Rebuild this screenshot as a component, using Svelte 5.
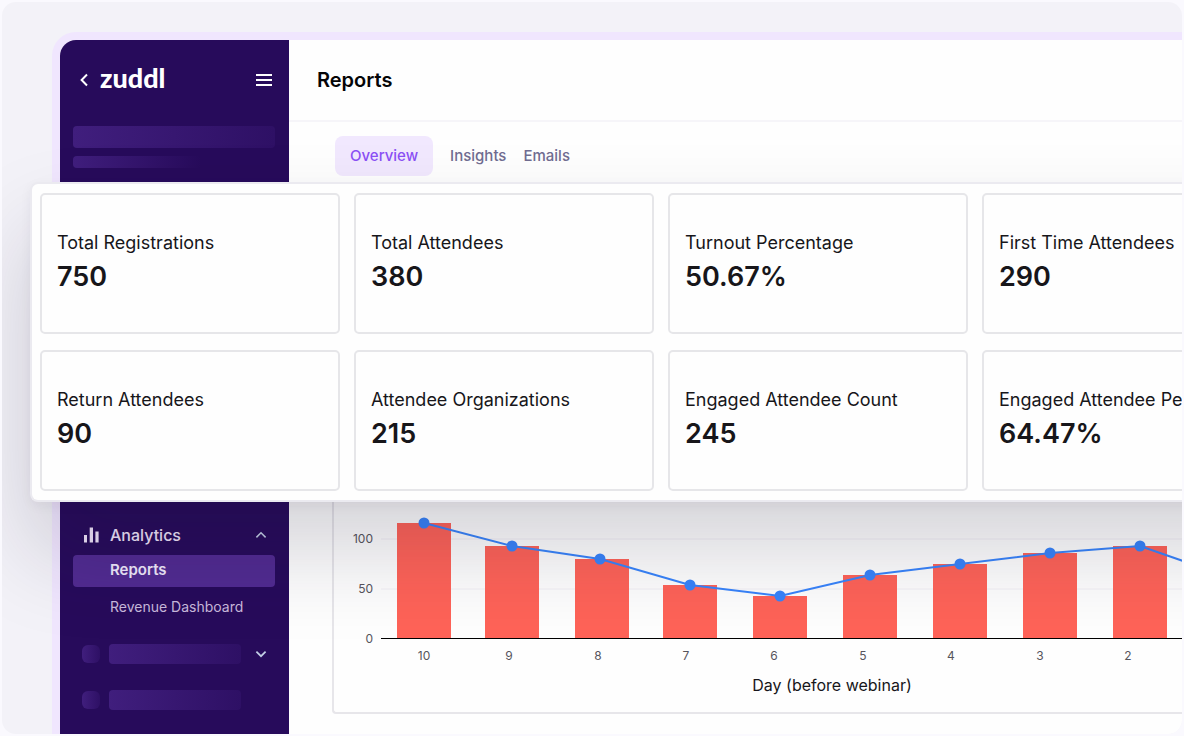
<script lang="ts">
  type Stat = { label: string; value: string };
  type Day = { day: string; count: number; x: number; tickX: number };

  const stats: Stat[] = [
    { label: "Total Registrations", value: "750" },
    { label: "Total Attendees", value: "380" },
    { label: "Turnout Percentage", value: "50.67%" },
    { label: "First Time Attendees", value: "290" },
    { label: "Return Attendees", value: "90" },
    { label: "Attendee Organizations", value: "215" },
    { label: "Engaged Attendee Count", value: "245" },
    { label: "Engaged Attendee Percentage", value: "64.47%" },
  ];

  const days: Day[] = [
    { day: "10", count: 116, x: 90, tickX: 90 },
    { day: "9", count: 93, x: 178, tickX: 175 },
    { day: "8", count: 80, x: 268, tickX: 264 },
    { day: "7", count: 54, x: 356, tickX: 352 },
    { day: "6", count: 43, x: 446, tickX: 440 },
    { day: "5", count: 64, x: 536, tickX: 529 },
    { day: "4", count: 75, x: 626, tickX: 617 },
    { day: "3", count: 86, x: 716, tickX: 706 },
    { day: "2", count: 93, x: 806, tickX: 794 },
  ];

  const tabs = ["Overview", "Insights", "Emails"];
  const ticks = [0, 50, 100];
  const baseline = 445;
  const barWidth = 54;

  let activeTab = $state("Overview");
  let analyticsOpen = $state(true);

  let linePoints = $derived(
    [...days.map(d => `${d.x - (d.day === "8" ? 2 : 0)},${baseline - d.count}`), "895,383"].join(" "),
  );
</script>

<div class="scene">
  <div class="window">
    <aside class="sidebar">
      <div class="brand-row">
        <button type="button" class="icon-btn" aria-label="Back">
          <svg width="8" height="14" viewBox="0 0 8 14" fill="none" stroke="currentColor" stroke-width="2">
            <path d="M7 1.5 1.6 7 7 12.5" />
          </svg>
        </button>
        <a class="logo" href="#home">zuddl</a>
        <button type="button" class="icon-btn menu-btn" aria-label="Menu">
          <svg width="16" height="14" viewBox="0 0 16 14" fill="currentColor">
            <rect y="1" width="16" height="2" />
            <rect y="6" width="16" height="2" />
            <rect y="11" width="16" height="2" />
          </svg>
        </button>
      </div>

      <div class="skeleton skeleton-title"></div>
      <div class="skeleton skeleton-sub"></div>

      <nav class="nav" aria-label="Main">
        <button
          type="button"
          class="nav-group"
          aria-expanded={analyticsOpen}
          onclick={() => (analyticsOpen = !analyticsOpen)}
        >
          <svg width="18" height="18" viewBox="0 0 18 18" fill="currentColor">
            <rect x="2" y="9" width="3" height="7.5" />
            <rect x="7.7" y="1.5" width="3.3" height="15" />
            <rect x="13.4" y="5.5" width="3.2" height="11" />
          </svg>
          <span>Analytics</span>
          <svg class="chevron" width="12" height="8" viewBox="0 0 12 8" fill="none" stroke="currentColor" stroke-width="1.5">
            <path d="M1.4 6.4 6 1.8l4.6 4.6" />
          </svg>
        </button>
        {#if analyticsOpen}
          <a class="nav-link current" href="#reports" aria-current="page">Reports</a>
          <a class="nav-link" href="#revenue">Revenue Dashboard</a>
        {/if}
        <div class="nav-skeleton first">
          <div class="skeleton skeleton-icon"></div>
          <div class="skeleton skeleton-label"></div>
          <svg class="chevron" width="12" height="8" viewBox="0 0 12 8" fill="none" stroke="currentColor" stroke-width="1.7">
            <path d="M1.4 1.6 6 6.2l4.6-4.6" />
          </svg>
        </div>
        <div class="nav-skeleton">
          <div class="skeleton skeleton-icon"></div>
          <div class="skeleton skeleton-label"></div>
        </div>
      </nav>
    </aside>

    <main class="main">
      <header class="header">
        <h1>Reports</h1>
      </header>

      <div class="tabs" role="tablist">
        {#each tabs as tab (tab)}
          <button
            type="button"
            role="tab"
            class:active={activeTab === tab}
            aria-selected={activeTab === tab}
            onclick={() => (activeTab = tab)}
          >
            {tab}
          </button>
        {/each}
      </div>

      <section class="chart-card" aria-label="Registrations by day">
        <svg width="900" height="518" viewBox="0 0 900 518">
          {#each ticks as tick (tick)}
            {#if tick > 0}
              <line class="grid" x1="47" x2="900" y1={baseline - tick} y2={baseline - tick} />
            {/if}
            <text class="tick" x="39" y={baseline - tick + 4} text-anchor="end">{tick}</text>
          {/each}
          {#each days as d (d.day)}
            <rect class="bar" x={d.x - barWidth / 2} y={baseline - d.count} width={barWidth} height={d.count} />
            <text class="tick" x={d.tickX} y={baseline + 21} text-anchor="middle">{d.day}</text>
          {/each}
          <rect x="47" y={baseline - 1} width="853" height="1" />
          <polyline class="trend" points={linePoints} />
          {#each days as d (d.day)}
            <circle class="dot" cx={d.x - (d.day === "8" ? 2 : 0)} cy={baseline - d.count} r="5.5" />
          {/each}
          <text class="axis-title" x="498" y="497" text-anchor="middle">Day (before webinar)</text>
        </svg>
      </section>
    </main>
  </div>

  <section class="stats-panel" aria-label="Key figures">
    {#each stats as stat (stat.label)}
      <article class="stat">
        <h2>{stat.label}</h2>
        <p>{stat.value}</p>
      </article>
    {/each}
  </section>
</div>

<style>
  :global(body) {
    background: #faf9fe;
    font-family: Inter, "Liberation Sans", sans-serif;
  }

  .scene {
    position: relative;
    display: flex;
    box-sizing: border-box;
    min-height: calc(100vh - 4px);
    margin: 2px;
    padding: 30px 0 0 50px;
    overflow: hidden;
    border-radius: 14px;
    background: #f3f2f8;
  }

  .window {
    display: flex;
    flex: 1;
    min-width: 0;
    overflow: hidden;
    border-top: 8px solid #f0e6fe;
    border-left: 8px solid #f0e6fe;
    border-radius: 24px 0 0 0;
    background: #fefefe;
  }

  .sidebar {
    display: flex;
    flex-direction: column;
    flex-shrink: 0;
    box-sizing: border-box;
    width: 229px;
    padding: 0 14px 11px 13px;
    background: #270b5b;
    color: #fff;
  }

  .brand-row {
    display: flex;
    align-items: center;
    height: 80px;
    padding: 0 3px 0 7px;
  }

  .icon-btn {
    display: flex;
    padding: 0;
    border: none;
    background: none;
    color: #fff;
    cursor: pointer;
  }

  .logo {
    margin-left: 12px;
    padding-bottom: 4px;
    color: #fff;
    font-family: Lato, sans-serif;
    font-size: 27px;
    font-weight: 900;
    line-height: 32px;
    text-decoration: none;
  }

  .menu-btn {
    margin-left: auto;
  }

  .skeleton {
    border-radius: 4px;
    background: linear-gradient(90deg, #401e7d, #2e1065);
  }

  .skeleton-title {
    height: 22px;
    margin-top: 6px;
  }

  .skeleton-sub {
    width: 128px;
    height: 12px;
    margin-top: 8px;
    background: linear-gradient(90deg, #401e7d, #270b5b);
  }

  .nav {
    display: flex;
    flex-direction: column;
    margin-top: auto;
  }

  .nav-group {
    display: flex;
    align-items: center;
    gap: 10px;
    height: 40px;
    padding: 0 8px 0 9px;
    border: none;
    background: none;
    color: #f0e4fa;
    font: inherit;
    font-size: 16px;
    font-weight: 500;
    cursor: pointer;
  }

  .chevron {
    margin-left: auto;
    color: #c3cfe6;
  }

  .nav-link {
    padding-left: 37px;
    border-radius: 4px;
    color: #c9b9dc;
    font-size: 14px;
    line-height: 40px;
    text-decoration: none;
  }

  .nav-link.current {
    padding-bottom: 2px;
    background: #512b91;
    color: #f0e9fb;
    font-size: 15px;
    font-weight: 600;
    line-height: 30px;
  }

  .nav-skeleton {
    display: flex;
    align-items: center;
    gap: 9px;
    height: 46px;
    padding: 0 8px 0 9px;
  }

  .nav-skeleton.first {
    margin-top: 4px;
  }

  .skeleton-icon {
    width: 18px;
    height: 18px;
    border-radius: 6px;
  }

  .skeleton-label {
    width: 132px;
    height: 20px;
  }

  .main {
    flex: 1;
    min-width: 0;
  }

  .header {
    display: flex;
    align-items: center;
    height: 80px;
    padding-left: 28px;
    border-bottom: 2px solid #f6f5f9;
  }

  .header h1 {
    margin: 0;
    color: #050507;
    font-size: 20px;
    font-weight: 600;
    line-height: 28px;
  }

  .tabs {
    display: flex;
    gap: 17px;
    padding: 14px 0 16px 46px;
  }

  .tabs button {
    height: 40px;
    padding: 0 0 2px;
    border: none;
    border-radius: 8px;
    background: none;
    color: #706c91;
    font: inherit;
    font-size: 15px;
    font-weight: 500;
    cursor: pointer;
  }

  .tabs button.active {
    padding: 0 15px 2px;
    background: #f1e8fe;
    color: #8b50f5;
  }

  .chart-card {
    margin: 0 0 20px 43px;
    overflow: hidden;
    border: 2px solid #e7e6ea;
    border-right: none;
    border-radius: 4px 0 0 4px;
  }

  .chart-card svg {
    display: block;
  }

  .grid {
    stroke: #f8f7fa;
    stroke-width: 2;
  }

  .tick {
    fill: #56555c;
    font-size: 12px;
  }

  .bar {
    fill: #ff6358;
  }

  .trend {
    fill: none;
    stroke: #3884fb;
    stroke-width: 2;
  }

  .dot {
    fill: #3884fb;
  }

  .axis-title {
    fill: #17161a;
    font-size: 16px;
  }

  /* Floats over the window and runs off its right edge. */
  .stats-panel {
    position: absolute;
    top: 180px;
    right: -120px;
    left: 28px;
    display: grid;
    grid-template-columns: repeat(4, 300px);
    gap: 16px 14px;
    padding: 9px 8px;
    border: 2px solid #ebeaf0;
    border-right: none;
    border-radius: 8px 0 0 8px;
    background: #fefefe;
    box-shadow:
      0 4px 12px rgb(30 20 50 / 5%),
      0 50px 90px rgb(30 20 50 / 18%);
  }

  .stat {
    box-sizing: border-box;
    height: 141px;
    padding: 36px 0 0 15px;
    border: 2px solid #e6e6e9;
    border-radius: 5px;
    white-space: nowrap;
  }

  .stat h2 {
    margin: 0;
    color: #17161a;
    font-size: 18px;
    font-weight: 400;
    line-height: 24px;
  }

  .stat p {
    margin: 4px 0 0;
    color: #17161a;
    font-size: 27px;
    font-weight: 600;
    line-height: 36px;
  }
</style>
